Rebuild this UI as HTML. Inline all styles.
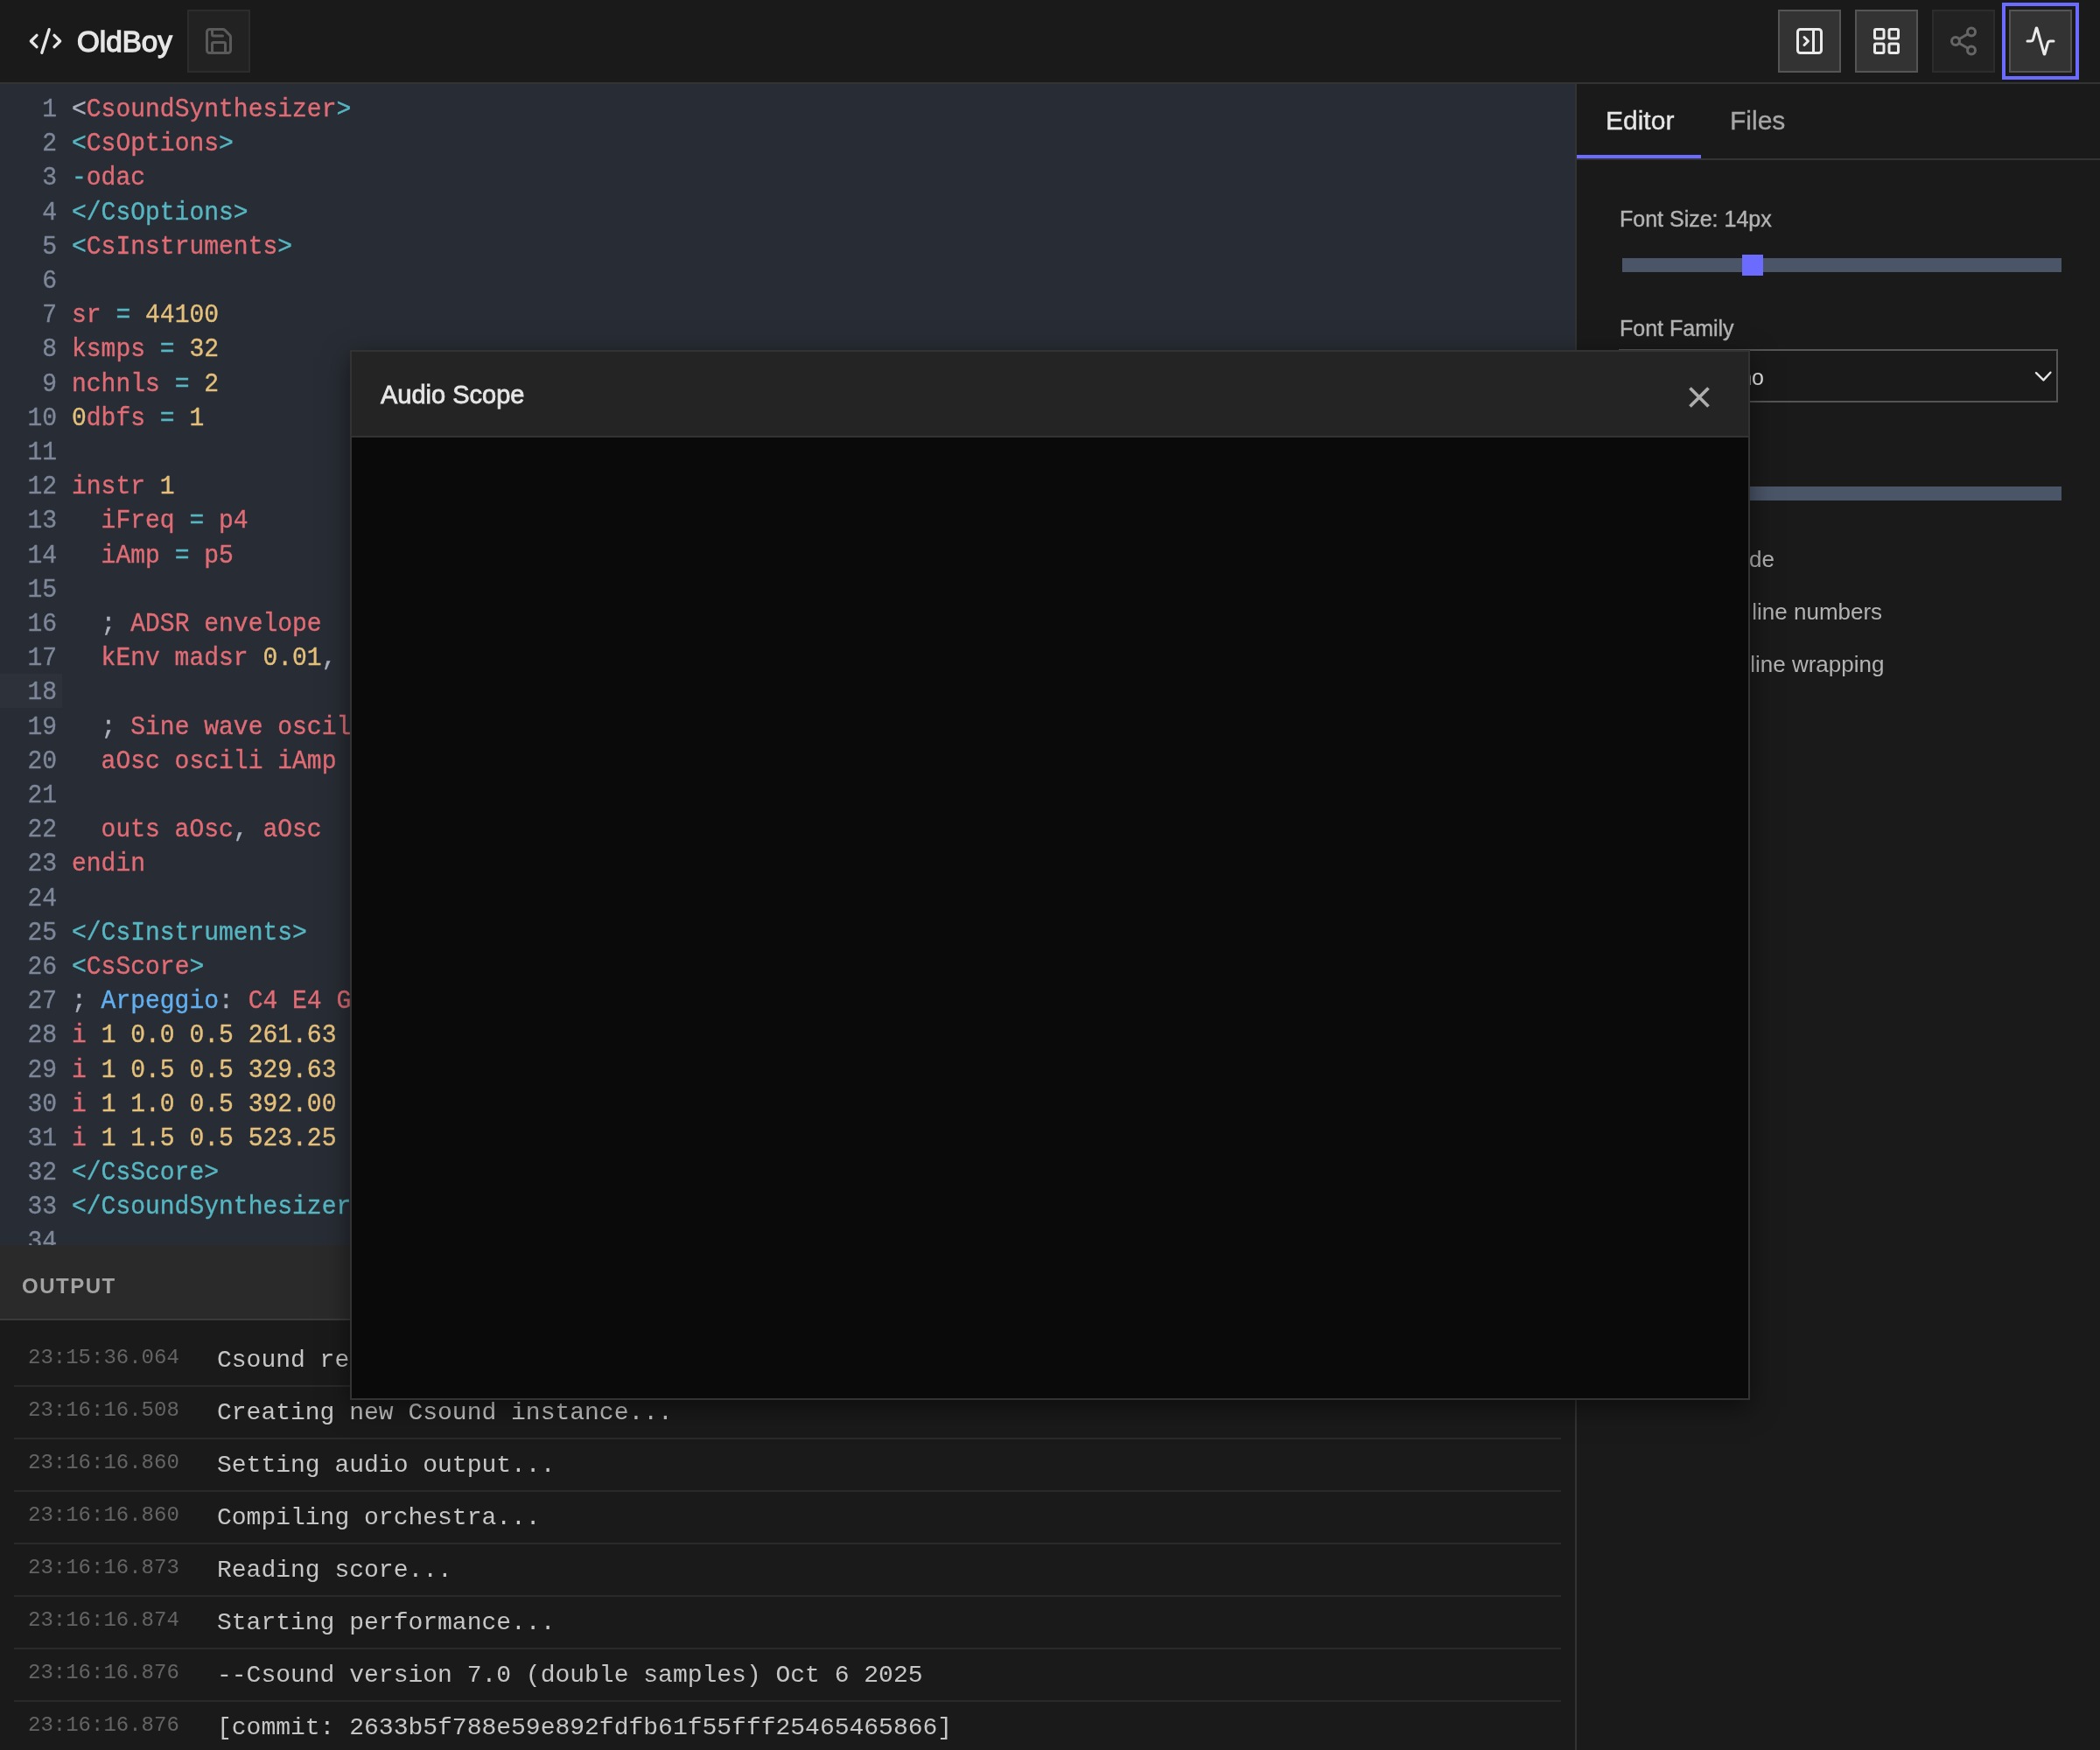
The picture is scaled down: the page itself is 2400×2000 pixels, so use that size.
<!DOCTYPE html>
<html><head><meta charset="utf-8">
<style>
*{box-sizing:border-box;margin:0;padding:0}
html,body{width:2400px;height:2000px;overflow:hidden;background:#1a1a1a;font-family:"Liberation Sans",sans-serif}
body{will-change:transform}
@media (max-width:1300px){html{zoom:0.5}}
.abs{position:absolute}
#hdr{left:0;top:0;width:2400px;height:96px;background:#1a1a1a;border-bottom:2px solid #333}
#logo{left:32px;top:27px}
#title{left:88px;top:26px;font-size:33.2px;-webkit-text-stroke:1.3px #e6e6e6;color:#e6e6e6;line-height:44px}
.btn{position:absolute;top:11px;width:72px;height:72px;background:#333;border:2px solid #555}
.btn svg{position:absolute;left:16px;top:16px}
#editor{left:0;top:96px;width:1800px;height:1327px;background:#282c34;overflow:hidden}
#gut-act{left:0;top:674px;width:71px;height:39.2px;background:#2c313a}
.code{position:absolute;top:10px;left:0;font-family:"Liberation Mono",monospace;font-size:28px;line-height:39.2px;white-space:pre}
.ln{position:absolute;left:0;width:65px;text-align:right;color:#7d8799}
.cl{position:absolute;left:82px;transform:scaleY(1.06);transform-origin:0 29px;-webkit-text-stroke:0.35px}
.ln{transform:scaleY(1.06);transform-origin:0 29px;-webkit-text-stroke:0.35px}
.r{color:#e06c75}.c{color:#56b6c2}.y{color:#e5c07b}.g{color:#abb2bf}.b{color:#61afef}
#outhdr{left:0;top:1423px;width:1800px;height:86px;background:#2a2a2a;border-bottom:2px solid #3a3a3a}
#outhdr span{position:absolute;left:25px;top:33px;font-size:24px;font-weight:bold;color:#a3a3a3;letter-spacing:1.5px}
#log{left:0;top:1509px;width:1800px;height:491px;background:#1a1a1a;overflow:hidden}
.row{position:absolute;left:16px;width:1768px;height:60px;border-bottom:2px solid #2a2a2a;font-family:"Liberation Mono",monospace}
.ts{position:absolute;left:16px;top:12px;font-size:24px;color:#646464;line-height:30px}
.msg{position:absolute;left:232px;top:13px;font-size:28px;color:#c6c6c6;line-height:34px;white-space:pre}
#panel{left:1800px;top:96px;width:600px;height:1904px;background:#1a1a1a;border-left:2px solid #333}
#tabs{left:0;top:0;width:598px;height:87px;border-bottom:2px solid #333}
.tab{position:absolute;top:22px;font-size:30px;line-height:40px;-webkit-text-stroke:0.35px currentColor}
#tabline{left:0;top:81px;width:142px;height:4px;background:#6b6bff}
.lbl{position:absolute;left:49px;font-size:25px;color:#b3b3b3;-webkit-text-stroke:0.4px #b3b3b3}
.track{position:absolute;left:52px;width:502px;height:16px;background:#4a5568}
.thumb{position:absolute;width:24px;height:24px;background:#6b6bff}
#sel{left:48px;top:303px;width:502px;height:61px;border:2px solid #555;background:#1a1a1a}
.chk{position:absolute;font-size:26px;color:#b3b3b3;line-height:30px;white-space:nowrap}
#modal{left:400px;top:400px;width:1600px;height:1200px;border:2px solid #333;background:#0a0a0a;box-shadow:0 8px 28px rgba(0,0,0,.5)}
#mhdr{left:0;top:0;width:1596px;height:98px;background:#242424;border-bottom:2px solid #333}
#mtitle{left:33px;top:31px;font-size:29px;-webkit-text-stroke:0.8px #e6e6e6;color:#e6e6e6;line-height:36px}
</style></head><body>
<div id="hdr" class="abs">
  <svg id="logo" class="abs" width="40" height="40" viewBox="0 0 24 24" fill="none" stroke="#e6e6e6" stroke-width="2" stroke-linecap="round" stroke-linejoin="round"><path d="m18 16 4-4-4-4"/><path d="m6 8-4 4 4 4"/><path d="m14.5 4-5 16"/></svg>
  <div id="title" class="abs">OldBoy</div>
  <div class="btn" style="left:214px;background:#222;border-color:#2c2c2c"><svg width="36" height="36" viewBox="0 0 24 24" fill="none" stroke="#5a5a5a" stroke-width="2" stroke-linecap="round" stroke-linejoin="round"><path d="M15.2 3a2 2 0 0 1 1.4.6l3.8 3.8a2 2 0 0 1 .6 1.4V19a2 2 0 0 1-2 2H5a2 2 0 0 1-2-2V5a2 2 0 0 1 2-2z"/><path d="M17 21v-7a1 1 0 0 0-1-1H8a1 1 0 0 0-1 1v7"/><path d="M7 3v4a1 1 0 0 0 1 1h7"/></svg></div>
  <div class="btn" style="left:2032px"><svg width="36" height="36" viewBox="0 0 24 24" fill="none" stroke="#eaeaea" stroke-width="2" stroke-linecap="round" stroke-linejoin="round"><rect width="18" height="18" x="3" y="3" rx="2"/><path d="M15 3v18"/><path d="m8 9 3 3-3 3"/></svg></div>
  <div class="btn" style="left:2120px"><svg width="36" height="36" viewBox="0 0 24 24" fill="none" stroke="#eaeaea" stroke-width="2" stroke-linecap="round" stroke-linejoin="round"><rect width="7" height="7" x="3" y="3" rx="1"/><rect width="7" height="7" x="14" y="3" rx="1"/><rect width="7" height="7" x="14" y="14" rx="1"/><rect width="7" height="7" x="3" y="14" rx="1"/></svg></div>
  <div class="btn" style="left:2208px;background:#222;border-color:#2c2c2c"><svg width="36" height="36" viewBox="0 0 24 24" fill="none" stroke="#666" stroke-width="2" stroke-linecap="round" stroke-linejoin="round"><circle cx="18" cy="5" r="3"/><circle cx="6" cy="12" r="3"/><circle cx="18" cy="19" r="3"/><line x1="8.59" x2="15.42" y1="13.51" y2="17.49"/><line x1="15.41" x2="8.59" y1="6.51" y2="10.49"/></svg></div>
  <div class="btn" style="left:2296px;outline:4px solid #6b6bff;outline-offset:4px"><svg width="36" height="36" viewBox="0 0 24 24" fill="none" stroke="#eaeaea" stroke-width="2" stroke-linecap="round" stroke-linejoin="round"><path d="M22 12h-2.48a2 2 0 0 0-1.93 1.46l-2.35 8.36a.25.25 0 0 1-.48 0L9.24 2.18a.25.25 0 0 0-.48 0l-2.35 8.36A2 2 0 0 1 4.49 12H2"/></svg></div>
</div>

<div id="editor" class="abs">
  <div id="gut-act" class="abs"></div>
  <div class="code">
<!--CODE-->
<div class="ln" style="top:0.0px">1</div><div class="cl" style="top:0.0px"><span class="g">&lt;</span><span class="r">CsoundSynthesizer</span><span class="c">&gt;</span></div>
<div class="ln" style="top:39.2px">2</div><div class="cl" style="top:39.2px"><span class="c">&lt;</span><span class="r">CsOptions</span><span class="c">&gt;</span></div>
<div class="ln" style="top:78.4px">3</div><div class="cl" style="top:78.4px"><span class="c">-</span><span class="r">odac</span></div>
<div class="ln" style="top:117.6px">4</div><div class="cl" style="top:117.6px"><span class="c">&lt;/CsOptions&gt;</span></div>
<div class="ln" style="top:156.8px">5</div><div class="cl" style="top:156.8px"><span class="c">&lt;</span><span class="r">CsInstruments</span><span class="c">&gt;</span></div>
<div class="ln" style="top:196.0px">6</div><div class="cl" style="top:196.0px"></div>
<div class="ln" style="top:235.2px">7</div><div class="cl" style="top:235.2px"><span class="r">sr</span><span class="g"> </span><span class="c">=</span><span class="g"> </span><span class="y">44100</span></div>
<div class="ln" style="top:274.4px">8</div><div class="cl" style="top:274.4px"><span class="r">ksmps</span><span class="g"> </span><span class="c">=</span><span class="g"> </span><span class="y">32</span></div>
<div class="ln" style="top:313.6px">9</div><div class="cl" style="top:313.6px"><span class="r">nchnls</span><span class="g"> </span><span class="c">=</span><span class="g"> </span><span class="y">2</span></div>
<div class="ln" style="top:352.8px">10</div><div class="cl" style="top:352.8px"><span class="y">0</span><span class="r">dbfs</span><span class="g"> </span><span class="c">=</span><span class="g"> </span><span class="y">1</span></div>
<div class="ln" style="top:392.0px">11</div><div class="cl" style="top:392.0px"></div>
<div class="ln" style="top:431.2px">12</div><div class="cl" style="top:431.2px"><span class="r">instr</span><span class="g"> </span><span class="y">1</span></div>
<div class="ln" style="top:470.4px">13</div><div class="cl" style="top:470.4px"><span class="g">  </span><span class="r">iFreq</span><span class="g"> </span><span class="c">=</span><span class="g"> </span><span class="r">p4</span></div>
<div class="ln" style="top:509.6px">14</div><div class="cl" style="top:509.6px"><span class="g">  </span><span class="r">iAmp</span><span class="g"> </span><span class="c">=</span><span class="g"> </span><span class="r">p5</span></div>
<div class="ln" style="top:548.8px">15</div><div class="cl" style="top:548.8px"></div>
<div class="ln" style="top:588.0px">16</div><div class="cl" style="top:588.0px"><span class="g">  ;</span><span class="r"> ADSR envelope</span></div>
<div class="ln" style="top:627.2px">17</div><div class="cl" style="top:627.2px"><span class="g">  </span><span class="r">kEnv madsr </span><span class="y">0.01</span><span class="g">, </span><span class="y">0.1</span><span class="g">, </span><span class="y">0.7</span><span class="g">, </span><span class="y">0.2</span></div>
<div class="ln" style="top:666.4px">18</div><div class="cl" style="top:666.4px"></div>
<div class="ln" style="top:705.6px">19</div><div class="cl" style="top:705.6px"><span class="g">  ;</span><span class="r"> Sine wave oscillator</span></div>
<div class="ln" style="top:744.8px">20</div><div class="cl" style="top:744.8px"><span class="g">  </span><span class="r">aOsc oscili iAmp </span><span class="c">*</span><span class="r"> kEnv</span><span class="g">, </span><span class="r">iFreq</span><span class="g">, </span><span class="y">1</span></div>
<div class="ln" style="top:784.0px">21</div><div class="cl" style="top:784.0px"></div>
<div class="ln" style="top:823.2px">22</div><div class="cl" style="top:823.2px"><span class="g">  </span><span class="r">outs aOsc</span><span class="g">, </span><span class="r">aOsc</span></div>
<div class="ln" style="top:862.4px">23</div><div class="cl" style="top:862.4px"><span class="r">endin</span></div>
<div class="ln" style="top:901.6px">24</div><div class="cl" style="top:901.6px"></div>
<div class="ln" style="top:940.8px">25</div><div class="cl" style="top:940.8px"><span class="c">&lt;/CsInstruments&gt;</span></div>
<div class="ln" style="top:980.0px">26</div><div class="cl" style="top:980.0px"><span class="c">&lt;</span><span class="r">CsScore</span><span class="c">&gt;</span></div>
<div class="ln" style="top:1019.2px">27</div><div class="cl" style="top:1019.2px"><span class="g">; </span><span class="b">Arpeggio</span><span class="g">: </span><span class="r">C4 E4 G4 C5</span></div>
<div class="ln" style="top:1058.4px">28</div><div class="cl" style="top:1058.4px"><span class="r">i</span><span class="g"> </span><span class="y">1 0.0 0.5 261.63 0.3</span></div>
<div class="ln" style="top:1097.6px">29</div><div class="cl" style="top:1097.6px"><span class="r">i</span><span class="g"> </span><span class="y">1 0.5 0.5 329.63 0.3</span></div>
<div class="ln" style="top:1136.8px">30</div><div class="cl" style="top:1136.8px"><span class="r">i</span><span class="g"> </span><span class="y">1 1.0 0.5 392.00 0.3</span></div>
<div class="ln" style="top:1176.0px">31</div><div class="cl" style="top:1176.0px"><span class="r">i</span><span class="g"> </span><span class="y">1 1.5 0.5 523.25 0.3</span></div>
<div class="ln" style="top:1215.2px">32</div><div class="cl" style="top:1215.2px"><span class="c">&lt;/CsScore&gt;</span></div>
<div class="ln" style="top:1254.4px">33</div><div class="cl" style="top:1254.4px"><span class="c">&lt;/CsoundSynthesizer&gt;</span></div>
<div class="ln" style="top:1293.6px">34</div><div class="cl" style="top:1293.6px"></div>
<!--/CODE-->
  </div>
</div>

<div id="outhdr" class="abs"><span>OUTPUT</span></div>
<div id="log" class="abs">
<!--LOG-->
<div class="row" style="top:16px"><div class="ts">23:15:36.064</div><div class="msg">Csound ready</div></div>
<div class="row" style="top:76px"><div class="ts">23:16:16.508</div><div class="msg">Creating new Csound instance...</div></div>
<div class="row" style="top:136px"><div class="ts">23:16:16.860</div><div class="msg">Setting audio output...</div></div>
<div class="row" style="top:196px"><div class="ts">23:16:16.860</div><div class="msg">Compiling orchestra...</div></div>
<div class="row" style="top:256px"><div class="ts">23:16:16.873</div><div class="msg">Reading score...</div></div>
<div class="row" style="top:316px"><div class="ts">23:16:16.874</div><div class="msg">Starting performance...</div></div>
<div class="row" style="top:376px"><div class="ts">23:16:16.876</div><div class="msg">--Csound version 7.0 (double samples) Oct 6 2025</div></div>
<div class="row" style="top:436px"><div class="ts">23:16:16.876</div><div class="msg">[commit: 2633b5f788e59e892fdfb61f55fff25465465866]</div></div>
<div class="row" style="top:496px"><div class="ts">23:16:16.877</div><div class="msg">libsndfile-1.2.2</div></div>
<!--/LOG-->
</div>

<div id="panel" class="abs">
  <div id="tabs" class="abs">
    <div class="tab" style="left:33px;color:#e6e6e6">Editor</div>
    <div class="tab" style="left:175px;color:#a6a6a6">Files</div>
    <div id="tabline" class="abs"></div>
  </div>
  <div class="lbl" style="top:140px">Font Size: 14px</div>
  <div class="track" style="top:199px"><div class="thumb" style="left:137px;top:-4px"></div></div>
  <div class="lbl" style="top:264.5px">Font Family</div>
  <div id="sel" class="abs"><div style="position:absolute;right:334px;top:14.5px;font-size:25px;color:#e6e6e6;line-height:30px;white-space:nowrap">Roboto Mono</div><svg style="position:absolute;left:0;top:0" width="502" height="61"><polyline points="475,25.2 483.4,33.4 491.4,24.7" fill="none" stroke="#e6e6e6" stroke-width="2.4" stroke-linecap="round" stroke-linejoin="round"/></svg></div>
  <div class="track" style="top:460px"></div>
  <div class="chk" style="right:372px;top:528px">Vim mode</div>
  <div class="chk" style="left:128px;top:588px">Show line numbers</div>
  <div class="chk" style="left:110px;top:648px">Enable line wrapping</div>
</div>

<div id="modal" class="abs">
  <div id="mhdr" class="abs">
    <div id="mtitle" class="abs">Audio Scope</div>
    <svg class="abs" style="left:1528px;top:40px" width="24" height="24" viewBox="0 0 24 24" stroke="#adadad" stroke-width="3.8"><path d="M1.5 1.5L22.5 22.5M22.5 1.5L1.5 22.5"/></svg>
  </div>
</div>
</body></html>
